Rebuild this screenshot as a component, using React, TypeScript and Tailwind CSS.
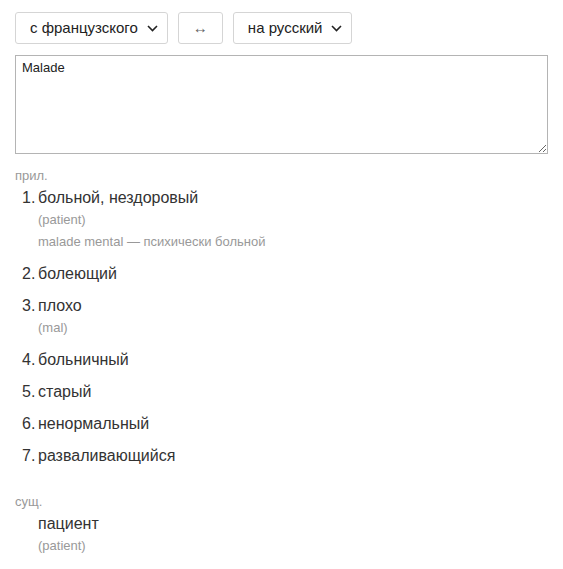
import { useState } from "react";

interface Meaning {
  text: string;
  subs?: string[];
}

const adjMeanings: Meaning[] = [
  { text: "больной, нездоровый", subs: ["(patient)", "malade mental — психически больной"] },
  { text: "болеющий" },
  { text: "плохо", subs: ["(mal)"] },
  { text: "больничный" },
  { text: "старый" },
  { text: "ненормальный" },
  { text: "разваливающийся" },
];

function Chevron() {
  return (
    <svg width="11" height="7" viewBox="0 0 11 7" className="ml-[9px] mt-[1px]">
      <path d="M1 1l4.5 4.5L10 1" fill="none" stroke="#222" strokeWidth="1.6" />
    </svg>
  );
}

export default function App() {
  const [text, setText] = useState("Malade");

  return (
    <div className="px-[15px] pt-3 font-['Liberation_Sans',Arial,sans-serif] text-[#333]">
      {/* language selectors */}
      <div className="flex gap-[10px]">
        <button className="flex h-[32px] items-center rounded-[3px] border border-[#d5d5d5] bg-white pl-[14px] pr-[9px] text-[15px] text-[#222]">
          с французского
          <Chevron />
        </button>
        <button className="flex h-[32px] w-[45px] items-center justify-center rounded-[3px] border border-[#d5d5d5] bg-white text-[15px] text-[#666]">
          ↔
        </button>
        <button className="flex h-[32px] items-center rounded-[3px] border border-[#d5d5d5] bg-white pl-[14px] pr-[9px] text-[15px] text-[#222]">
          на русский
          <Chevron />
        </button>
      </div>

      <textarea
        value={text}
        onChange={(e) => setText(e.target.value)}
        className="mt-[11px] block h-[99px] w-full resize-y border border-[#b4b4b4] px-[6px] py-[4px] text-[13px] leading-[16px] text-[#222] outline-none"
      />

      {/* adjective */}
      <div className="mt-[14px] text-[13px] leading-[16px] text-[#999]">прил.</div>
      <ol className="mt-[3px]">
        {adjMeanings.map((m, i) => (
          <li key={i} className="mb-[10px] flex">
            <span className="w-[23px] pl-[7px] text-[16px] leading-[22px]">{i + 1}.</span>
            <div>
              <div className="text-[16px] leading-[22px] text-[#333]">{m.text}</div>
              {m.subs?.map((s) => (
                <div key={s} className="text-[13px] leading-[22px] text-[#999]">
                  {s}
                </div>
              ))}
            </div>
          </li>
        ))}
      </ol>

      {/* noun */}
      <div className="mt-[27px] text-[13px] leading-[16px] text-[#999]">сущ.</div>
      <div className="mt-[3px] pl-[23px]">
        <div className="text-[16px] leading-[22px] text-[#333]">пациент</div>
        <div className="text-[13px] leading-[22px] text-[#999]">(patient)</div>
      </div>
    </div>
  );
}
